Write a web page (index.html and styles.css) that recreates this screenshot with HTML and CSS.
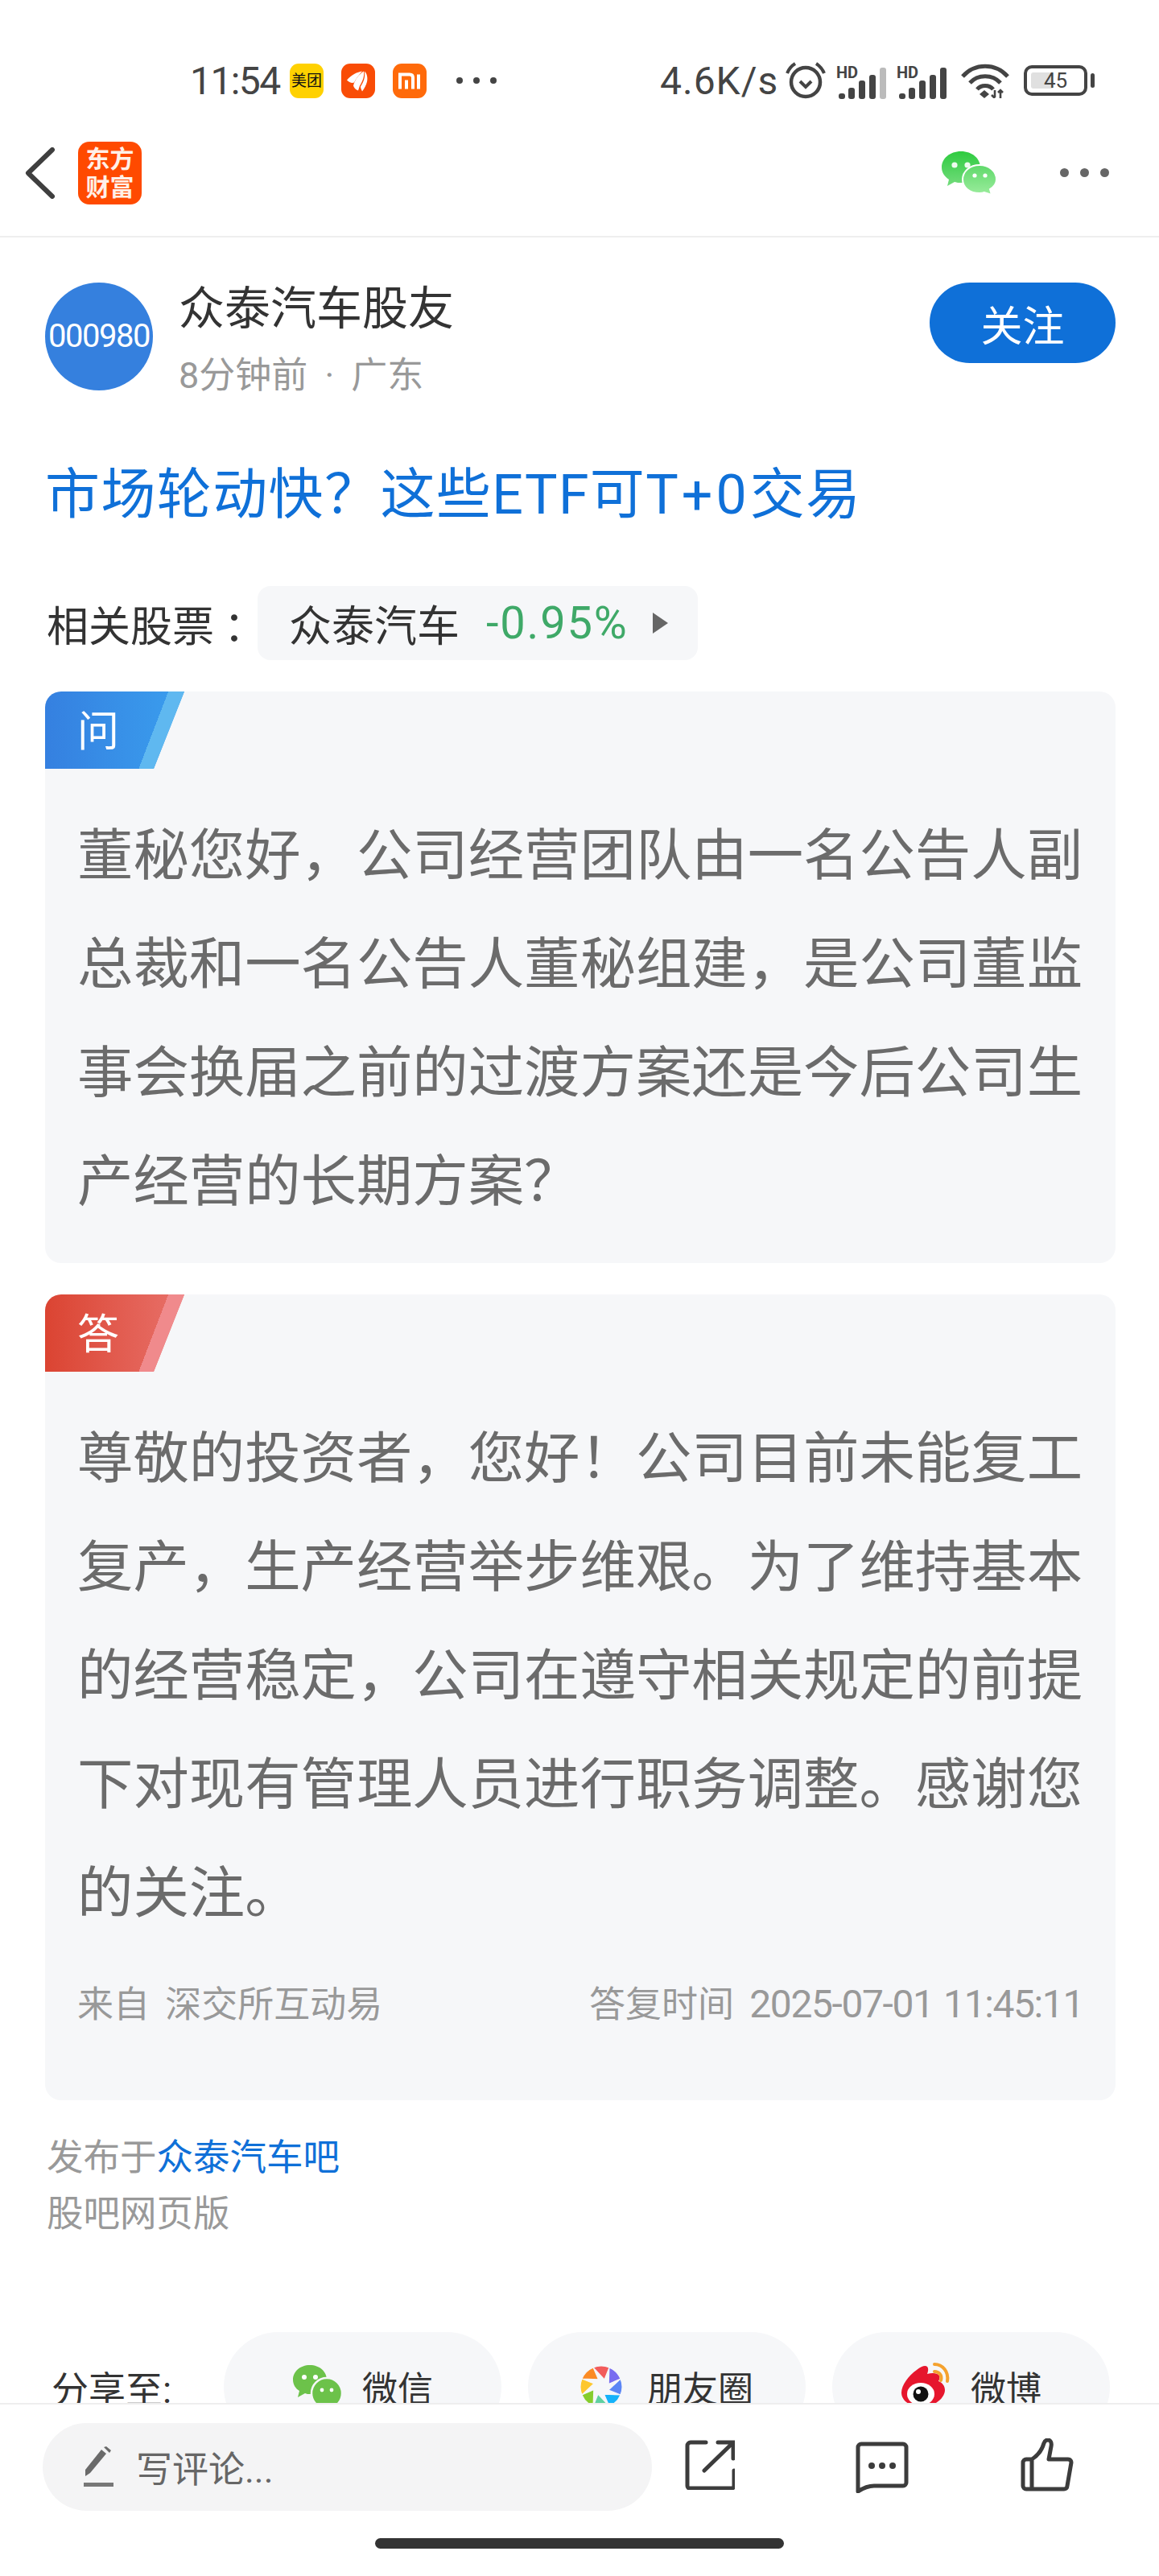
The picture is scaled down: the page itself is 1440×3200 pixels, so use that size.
FILE: index.html
```html
<!DOCTYPE html>
<html lang="zh-CN">
<head>
  <meta charset="UTF-8" />
  <meta name="viewport" content="width=device-width, initial-scale=1.0"/>
  <title>众泰汽车股友</title>
  <link rel="stylesheet" href="styles.css">
</head>
<body>
  <div class="page">
    <!-- status bar -->
    <div class="status">
      <span class="clock">11:54</span>
      <span class="app-icon app-meituan">美团</span>
      <svg class="app-icon app-flag" viewBox="0 0 42 42">
        <path fill="#fff" d="M7 20c6-7 13-10 19-11-4 5-8 9-10 14-3 1-6 0-9-3z"/>
        <path fill="#fff" d="M15 27c2-8 7-14 13-18 1 5-1 12-5 18l-2 6c-3-1-5-3-6-6z"/>
        <path fill="#fff" d="M29 9c3 3 4 8 3 13-1 4-3 8-6 12-1-2-2-4-2-6 4-6 6-12 5-19z"/>
      </svg>
      <svg class="app-icon app-mi" viewBox="0 0 42 42">
        <path fill="none" stroke="#fff" stroke-width="4" d="M9 31V13h12c3 0 4 2 4 4v14M17 20v11"/>
        <path fill="none" stroke="#fff" stroke-width="4" d="M32 13v18"/>
      </svg>
      <span class="status-more"><i></i><i></i><i></i></span>
      <span class="speed">4.6K/s</span>
      <svg class="alarm" viewBox="0 0 52 46">
        <circle cx="26" cy="25" r="18" fill="none" stroke="#444" stroke-width="4.5"/>
        <path d="M19 24l7 7 7-7" fill="none" stroke="#444" stroke-width="4"/>
        <path d="M3 14C5 9 8 5 13 2M49 14C47 9 44 5 39 2" fill="none" stroke="#444" stroke-width="4"/>
      </svg>
      <svg class="signal" viewBox="0 -4 64 46">
        <text x="0" y="16" class="hd">HD</text>
        <rect x="3" y="35" width="8" height="7" rx="3" fill="#444"/>
        <rect x="15" y="28" width="8" height="14" rx="3" fill="#444"/>
        <rect x="28" y="19" width="8" height="23" rx="3" fill="#444"/>
        <rect x="41" y="12" width="8" height="30" rx="3" fill="#444"/>
        <rect x="54" y="3" width="8" height="39" rx="3" fill="#bbb"/>
      </svg>
      <svg class="signal signal-two" viewBox="0 -4 64 46">
        <text x="0" y="16" class="hd">HD</text>
        <rect x="3" y="35" width="8" height="7" rx="3" fill="#444"/>
        <rect x="15" y="28" width="8" height="14" rx="3" fill="#444"/>
        <rect x="28" y="19" width="8" height="23" rx="3" fill="#444"/>
        <rect x="41" y="12" width="8" height="30" rx="3" fill="#444"/>
        <rect x="54" y="3" width="8" height="39" rx="3" fill="#444"/>
      </svg>
      <svg class="wifi" viewBox="0 0 60 44">
        <path d="M2 17C17 0 43 0 58 17M11 25C21 14 39 14 49 25M20 33c5-6 15-6 20 0" fill="none" stroke="#444" stroke-width="5"/>
        <path d="M23 39l6-5 6 5-6 5z" fill="#444"/>
        <path d="M42 34v9M38 40l4 4M49 44v-10M46 37l3-3 3 3" fill="none" stroke="#444" stroke-width="2.6"/>
      </svg>
      <span class="battery"><span class="battery-fill"></span><span class="battery-num">45</span></span>
      <span class="battery-tip"></span>
    </div>

    <!-- nav -->
    <div class="nav">
      <svg class="back" viewBox="0 0 38 64">
        <path d="M34 3L4 32l30 29" fill="none" stroke="#3f3f3f" stroke-width="6" stroke-linecap="round" stroke-linejoin="round"/>
      </svg>
      <div class="logo">东方<br>财富</div>
      <div class="nav-right">
        <svg class="wechat" viewBox="0 0 70 56">
          <defs>
            <linearGradient id="wxa" x1="0" y1="0" x2="0" y2="1"><stop offset="0" stop-color="#2ecb3f"/><stop offset="1" stop-color="#74dc7d"/></linearGradient>
            <linearGradient id="wxb" x1="0" y1="0" x2="0" y2="1"><stop offset="0" stop-color="#5fd96a"/><stop offset="1" stop-color="#9bec9d"/></linearGradient>
          </defs>
          <path fill="url(#wxa)" d="M25 1C11 1 1 10 1 21c0 6 3 11 9 15l-2 8 9-5c3 1 5 1 8 1 14 0 24-8 24-19S39 1 25 1z"/>
          <circle cx="17" cy="18" r="3.6" fill="#fff" opacity=".9"/>
          <circle cx="33" cy="18" r="3.6" fill="#fff" opacity=".9"/>
          <path fill="url(#wxb)" stroke="#fff" stroke-width="2" d="M48 18c-12 0-21 8-21 18s9 17 21 17c2 0 4 0 6-1l9 3-2-7c5-3 8-7 8-12 0-10-9-18-21-18z"/>
          <circle cx="42" cy="31" r="2.6" fill="#fff"/>
          <circle cx="55" cy="31" r="2.6" fill="#fff"/>
        </svg>
        <span class="nav-more"><i></i><i></i><i></i></span>
      </div>
    </div>

    <div class="main">
      <div class="author">
        <div class="avatar">000980</div>
        <div class="author-info">
          <div class="author-name">众泰汽车股友</div>
          <div class="author-sub">8分钟前<span class="sub-dot">·</span>广东</div>
        </div>
        <button class="follow">关注</button>
      </div>

      <h1 class="title">市场轮动快？这些ETF可<span class="title-num">T+0</span>交易</h1>

      <div class="related">
        <span class="related-label">相关股票<span class="colon">：</span></span>
        <div class="chip">
          <span class="chip-name">众泰汽车</span>
          <span class="chip-pct">-0.95%</span>
          <span class="chip-arrow"></span>
        </div>
      </div>

      <div class="card">
        <div class="tag tag-q"><span>问</span></div>
        <p class="card-text">董秘您好，公司经营团队由一名公告人副总裁和一名公告人董秘组建，是公司董监事会换届之前的过渡方案还是今后公司生产经营的长期方案？</p>
      </div>

      <div class="card card-answer">
        <div class="tag tag-a"><span>答</span></div>
        <p class="card-text">尊敬的投资者，您好！公司目前未能复工复产，生产经营举步维艰。为了维持基本的经营稳定，公司在遵守相关规定的前提下对现有管理人员进行职务调整。感谢您的关注。</p>
        <div class="card-meta">
          <span>来自 深交所互动易</span>
          <span>答复时间 <span class="meta-date">2025-07-01 11:45:11</span></span>
        </div>
      </div>

      <div class="origin">
        <div>发布于<a class="origin-link">众泰汽车吧</a></div>
        <div>股吧网页版</div>
      </div>

      <div class="share">
        <span class="share-label">分享至:</span>
        <div class="pill">
          <svg class="pill-wx" viewBox="0 0 62 56">
            <path fill="#6cc24a" d="M22 1C10 1 1 9 1 19c0 6 3 11 8 14l-2 8 9-5c2 1 4 1 6 1 12 0 21-8 21-18S34 1 22 1z"/>
            <circle cx="15" cy="16" r="3" fill="#fff"/>
            <circle cx="29" cy="16" r="3" fill="#fff"/>
            <circle cx="43" cy="36" r="19" fill="#6cc24a" stroke="#f6f7f9" stroke-width="2.5"/>
            <circle cx="37" cy="32" r="2.4" fill="#fff"/>
            <circle cx="49" cy="32" r="2.4" fill="#fff"/>
          </svg>
          <span>微信</span>
        </div>
        <div class="pill">
          <svg class="pill-moments" viewBox="-26 -26 52 52">
            <g stroke="#f6f7f9" stroke-width="1.2">
              <path fill="#f25b5b" d="M4 -9L-10 -24A26 26 0 0 1 10 -24Z"/>
              <path fill="#7a6cf0" d="M4 -9L-10 -24A26 26 0 0 1 10 -24Z" transform="rotate(45)"/>
              <path fill="#5b86f5" d="M4 -9L-10 -24A26 26 0 0 1 10 -24Z" transform="rotate(90)"/>
              <path fill="#15b2fa" d="M4 -9L-10 -24A26 26 0 0 1 10 -24Z" transform="rotate(135)"/>
              <path fill="#5fd0a0" d="M4 -9L-10 -24A26 26 0 0 1 10 -24Z" transform="rotate(180)"/>
              <path fill="#86cd2c" d="M4 -9L-10 -24A26 26 0 0 1 10 -24Z" transform="rotate(225)"/>
              <path fill="#fdc72e" d="M4 -9L-10 -24A26 26 0 0 1 10 -24Z" transform="rotate(270)"/>
              <path fill="#fb8b24" d="M4 -9L-10 -24A26 26 0 0 1 10 -24Z" transform="rotate(315)"/>
            </g>
          </svg>
          <span>朋友圈</span>
        </div>
        <div class="pill">
          <svg class="pill-weibo" viewBox="0 0 62 62">
            <path fill="#e6162d" d="M20 10c6-5 11-6 13-4 2 2 1 6 0 9 7-2 13-1 15 2 1 3 0 5-1 7 5 2 8 6 8 11 0 10-13 21-29 21C13 56 1 49 1 38c0-9 9-21 19-28z"/>
            <ellipse cx="25" cy="40" rx="17" ry="14" fill="#fff"/>
            <circle cx="25" cy="40" r="9.5" fill="#111"/>
            <circle cx="22" cy="37" r="3" fill="#fff"/>
            <path d="M42 3c10 0 18 9 16 21M42 12c5 0 10 4 8 11" fill="none" stroke="#f5a22e" stroke-width="4" stroke-linecap="round"/>
          </svg>
          <span>微博</span>
        </div>
      </div>
    </div>

    <!-- bottom bar -->
    <div class="bottom">
      <div class="bottom-row">
        <div class="comment-box">
          <svg class="pencil" viewBox="0 0 38 52">
            <path fill="#6a6a6a" d="M3 37l0-8L23 4l6 5L9 33z"/>
            <path fill="#6a6a6a" d="M26 1l3-1 6 5-2 3z"/>
            <rect x="1" y="45" width="37" height="5" fill="#777"/>
          </svg>
          <span>写评论...</span>
        </div>
        <svg class="act act-share" viewBox="0 0 62 62">
          <path d="M26 3H7a4 4 0 0 0-4 4v50a3 3 0 0 0 3 3h52a3 3 0 0 0 3-3V38M24 38L58 5M41 3h19v20" fill="none" stroke="#3c3c3c" stroke-width="5" stroke-linecap="round"/>
        </svg>
        <svg class="act act-comment" viewBox="0 0 66 64">
          <path d="M3 7a4 4 0 0 1 4-4h52a4 4 0 0 1 4 4v44a4 4 0 0 1-4 4H23c-8 0-14 3-20 7z" fill="none" stroke="#3c3c3c" stroke-width="5" stroke-linejoin="round"/>
          <circle cx="20" cy="30" r="4" fill="#3c3c3c"/>
          <circle cx="33" cy="30" r="4" fill="#3c3c3c"/>
          <circle cx="46" cy="30" r="4" fill="#3c3c3c"/>
        </svg>
        <svg class="act act-like" viewBox="0 0 66 66">
          <path d="M14 26H7a4 4 0 0 0-4 4v29a4 4 0 0 0 4 4h7zM14 26c8-5 13-13 15-20 1-3 3-4 5-4 3 0 5 3 4 8l-3 16h24c3 0 4 2 4 4l-5 29c0 3-2 4-4 4H14z" fill="none" stroke="#3c3c3c" stroke-width="5" stroke-linejoin="round"/>
        </svg>
      </div>
      <div class="home-bar"></div>
    </div>
  </div>
</body>
</html>
```

FILE: styles.css
```css
* {
  box-sizing: border-box;
}

body {
  margin: 0;
  background: #fff;
  font-family: Roboto, 'Noto Sans CJK SC', sans-serif;
  color: #333;
}

.page {
  width: 1440px;
  height: 3200px;
  display: flex;
  flex-direction: column;
  overflow: hidden;
}

/* status bar */
.status {
  height: 150px;
  padding: 50px 0 0 236px;
  display: flex;
  align-items: center;
  flex-shrink: 0;
  color: #444;
}

.clock {
  width: 124px;
  font-size: 48px;
  letter-spacing: -1.6px;
}

.app-icon {
  width: 42px;
  height: 43px;
  border-radius: 11px;
  margin-right: 22px;
  flex-shrink: 0;
}

.app-meituan {
  background: #ffd100;
  color: #111;
  font-size: 19px;
  line-height: 43px;
  text-align: center;
  white-space: nowrap;
}

.app-flag {
  background: #f94c06;
}

.app-mi {
  background: #ff6a0a;
}

.status-more {
  display: flex;
  gap: 13px;
  margin-left: 15px;
}

.status-more i {
  width: 8px;
  height: 8px;
  border-radius: 50%;
  background: #444;
}

.speed {
  width: 155px;
  margin-left: 203px;
  font-size: 48px;
  letter-spacing: 1px;
}

.alarm {
  width: 52px;
  height: 46px;
}

.signal {
  width: 64px;
  height: 46px;
  margin-left: 12px;
}

.signal-two {
  margin-left: 11px;
}

.hd {
  font-family: Roboto, sans-serif;
  font-size: 20px;
  font-weight: 700;
  fill: #444;
}

.wifi {
  width: 60px;
  height: 44px;
  margin-left: 16px;
}

.battery {
  position: relative;
  width: 79px;
  height: 38px;
  margin-left: 18px;
  border: 4px solid #444;
  border-radius: 10px;
  display: flex;
  align-items: center;
  justify-content: center;
}

.battery-fill {
  position: absolute;
  left: 5px;
  top: 5px;
  bottom: 5px;
  width: 28px;
  border-radius: 3px;
  background: #e0e0e0;
}

.battery-num {
  position: relative;
  font-size: 26px;
  line-height: 30px;
  color: #444;
}

.battery-tip {
  width: 5px;
  height: 18px;
  margin-left: 4px;
  border-radius: 3px;
  background: #444;
}

/* nav */
.nav {
  height: 145px;
  padding: 0 62px 14px 31px;
  border-bottom: 2px solid #eee;
  display: flex;
  align-items: center;
  flex-shrink: 0;
}

.back {
  width: 38px;
  height: 64px;
}

.logo {
  width: 79px;
  height: 78px;
  margin-left: 28px;
  border-radius: 14px;
  background: #ff4a00;
  color: #fff0e8;
  font-size: 30px;
  font-weight: 700;
  line-height: 35px;
  padding-top: 4px;
  text-align: center;
}

.nav-right {
  margin-left: auto;
  display: flex;
  align-items: center;
}

.wechat {
  width: 70px;
  height: 56px;
}

.nav-more {
  display: flex;
  gap: 14px;
  margin-left: 78px;
}

.nav-more i {
  width: 11px;
  height: 11px;
  border-radius: 50%;
  background: #666;
}

/* content */
.main {
  flex: 1;
  min-height: 0;
  overflow: hidden;
}

.author {
  padding: 56px 54px 0 56px;
  display: flex;
  align-items: flex-start;
}

.avatar {
  width: 134px;
  height: 134px;
  border-radius: 50%;
  background: #3580de;
  color: #fff;
  font-size: 40px;
  line-height: 134px;
  letter-spacing: -1.5px;
  text-align: center;
  flex-shrink: 0;
}

.author-info {
  margin-left: 32px;
  flex: 1;
}

.author-name {
  font-size: 57px;
  line-height: 66px;
  color: #333;
}

.author-sub {
  margin-top: 24px;
  font-size: 45px;
  line-height: 52px;
  color: #999;
}

.sub-dot {
  display: inline-block;
  width: 54px;
  text-align: center;
}

.follow {
  width: 231px;
  height: 100px;
  border: none;
  border-radius: 50px;
  background: #0f70d8;
  color: #fff;
  font-family: inherit;
  font-size: 52px;
  padding: 0;
}

.title {
  margin: 77px 0 0 56px;
  font-size: 68px;
  font-weight: 400;
  line-height: 90px;
  letter-spacing: 1.4px;
  color: #0f70d8;
}

.title-num {
  letter-spacing: 4px;
}

.related {
  margin: 68px 0 0 58px;
  display: flex;
  align-items: center;
  font-size: 52px;
  color: #333;
}

.related-label {
  flex-shrink: 0;
  white-space: nowrap;
}

.colon {
  margin-left: 12px;
  margin-right: -12px;
  font-family: 'Noto Sans CJK TC', sans-serif;
}

.chip {
  height: 92px;
  width: 547px;
  margin-left: 2px;
  padding-left: 39px;
  border-radius: 16px;
  background: #f6f7f9;
  display: flex;
  align-items: center;
  flex-shrink: 0;
}

.chip-name {
  font-size: 53px;
}

.chip-pct {
  margin-left: 33px;
  color: #3fa968;
  font-size: 56px;
  letter-spacing: 1.8px;
}

.chip-arrow {
  margin-left: 30px;
  border-left: 19px solid #666;
  border-top: 13px solid transparent;
  border-bottom: 13px solid transparent;
}

.card {
  margin: 39px 54px 0 56px;
  padding-bottom: 33px;
  border-radius: 20px;
  background: #f6f7f9;
  overflow: hidden;
}

.card-answer {
  padding-bottom: 93px;
}

.tag {
  width: 173px;
  height: 96px;
  padding-bottom: 6px;
  display: flex;
  align-items: center;
  color: #fff;
  font-size: 52px;
  clip-path: polygon(0 0, 100% 0, 78% 100%, 0 100%);
}

.tag span {
  margin-left: 40px;
}

.tag-q {
  background:
    linear-gradient(111deg, transparent 143px, #5fb8f0 143px),
    linear-gradient(90deg, #3580e0, #3a9eee);
}

.tag-a {
  background:
    linear-gradient(111deg, transparent 143px, #f08a8c 143px),
    linear-gradient(90deg, #db4432, #e8716a);
}

.card-text {
  margin: 41px 40px 0 40px;
  font-size: 69.4px;
  line-height: 135px;
  color: #6b6b6b;
}

.card-meta {
  margin: 36px 40px 0 40px;
  height: 60px;
  display: flex;
  justify-content: space-between;
  align-items: center;
  font-size: 45px;
  word-spacing: 8px;
  color: #999;
}

.meta-date {
  font-size: 48px;
  letter-spacing: -1.4px;
  word-spacing: 2px;
}

.origin {
  margin: 37px 0 0 58px;
  font-size: 45.5px;
  line-height: 70px;
  color: #999;
}

.origin-link {
  color: #0f70d8;
}

.share {
  margin-top: 111px;
  padding-left: 64px;
  display: flex;
  align-items: center;
}

.share-label {
  width: 214px;
  font-size: 46px;
  color: #333;
}

.pill {
  width: 345px;
  height: 136px;
  margin-right: 33px;
  border-radius: 68px;
  background: #f6f7f9;
  display: flex;
  align-items: center;
  justify-content: center;
  font-size: 44px;
  color: #333;
}

.pill-wx {
  width: 62px;
  height: 56px;
  margin-right: 25px;
}

.pill-moments {
  width: 52px;
  height: 52px;
  margin-right: 31px;
}

.pill-weibo {
  width: 62px;
  height: 62px;
  margin-right: 25px;
}

/* bottom bar */
.bottom {
  height: 215px;
  border-top: 2px solid #eee;
  background: #fff;
  flex-shrink: 0;
}

.bottom-row {
  padding: 23px 0 0 53px;
  display: flex;
  align-items: center;
  height: 132px;
}

.comment-box {
  width: 757px;
  height: 109px;
  border-radius: 55px;
  background: #f4f4f5;
  padding-left: 50px;
  display: flex;
  align-items: center;
  color: #666;
  font-size: 45px;
}

.pencil {
  width: 38px;
  height: 52px;
  margin-right: 28px;
}

.act {
  flex-shrink: 0;
}

.act-share {
  width: 62px;
  height: 62px;
  margin-left: 41px;
  margin-top: -6px;
}

.act-comment {
  width: 66px;
  height: 64px;
  margin-left: 150px;
}

.act-like {
  width: 66px;
  height: 66px;
  margin-left: 139px;
  margin-top: -6px;
}

.home-bar {
  width: 508px;
  height: 13px;
  margin: 34px 0 0 466px;
  border-radius: 7px;
  background: #333;
}
```
